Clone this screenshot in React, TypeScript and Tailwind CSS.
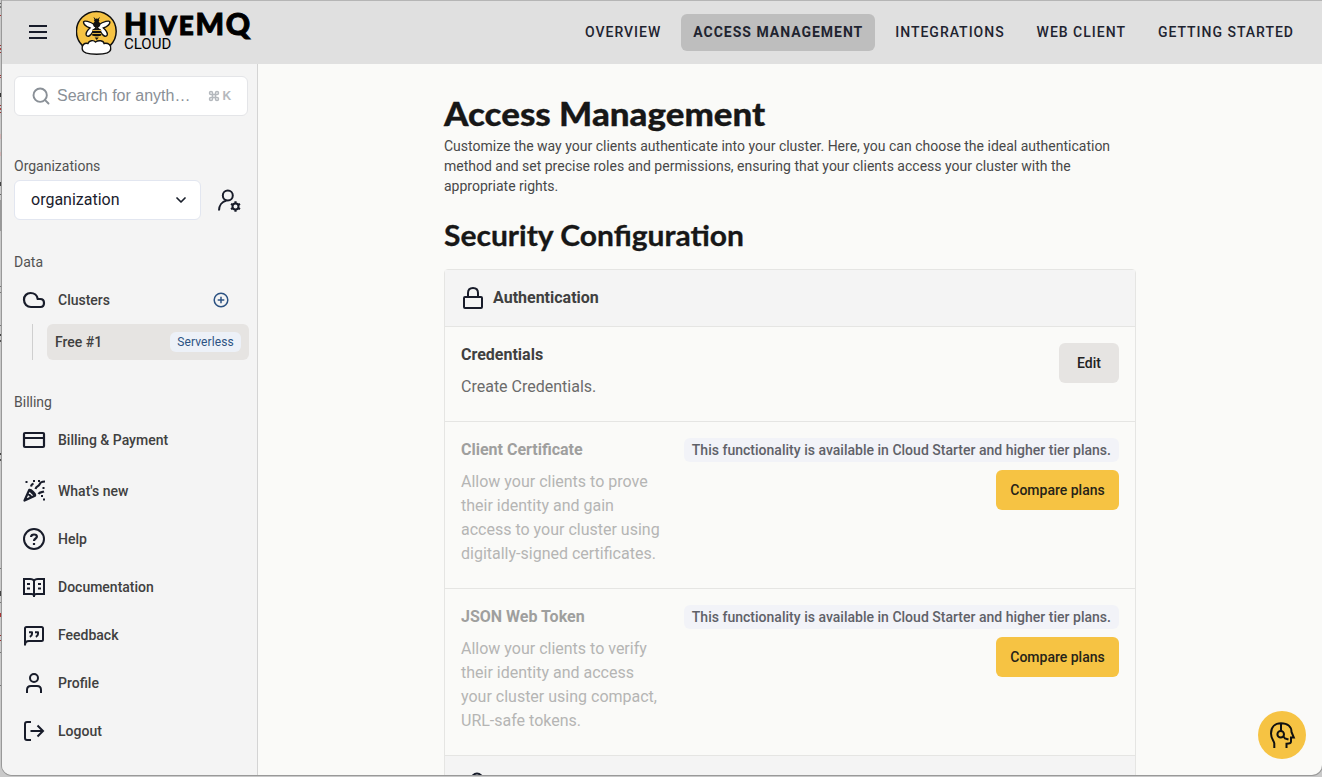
import React from "react";
import { Search, Command, ChevronDown } from "lucide-react";

const line = { fill: "none", stroke: "currentColor", strokeWidth: 2, strokeLinecap: "butt" as const, strokeLinejoin: "round" as const };

function Icon({ children, className = "size-6" }: { children: React.ReactNode; className?: string }) {
  return (
    <svg viewBox="0 0 24 24" className={`shrink-0 text-[#181c2a] ${className}`} {...line}>
      {children}
    </svg>
  );
}

const icons = {
  cloud: <path d="M8.500 5C4.800 5 2 7.800 2 11.700C2 15.800 5 19 9 19H18.500C20.700 19 22 17.200 22 15C22 12.600 20.500 11 18.200 11H15.700C15.200 7.500 12.300 5 8.500 5Z" strokeWidth="2.200" />,
  card: <><rect x="2" y="5" width="20" height="14" rx="1" strokeWidth="2.200" /><path d="M2 10H22" /></>,
  party: <><path strokeWidth="2.200" d="M2.500 21.500L7.200 11L13 16.800L2.500 21.500ZM7.200 11C9 10.500 14 15 13 16.800M6 14.500L9.500 18" /><path strokeWidth="2.200" d="M9 7.500C9.300 5.500 10 5 11.500 4.500M13.500 10C14.500 7 16 8 17.500 5.500C18 3.500 19 2.500 23 2.500M16.500 15C18 12.500 19.500 13.500 22 12.500" /><path d="M3.500 3H5.500M11 2H13M16 2H18M20.500 9H22.500M21 20.500H23M19 17H21" /></>,
  help: <><circle cx="12" cy="12" r="10" /><path strokeWidth="2.200" d="M9 10C9.200 8.200 10.400 7.500 12 7.500C13.700 7.500 14.900 8.400 14.900 9.800C14.900 11.600 12 11.500 12 14M12 16V18" /></>,
  book: <path strokeLinejoin="miter" d="M12 5V22M12 6C11.500 4.500 10 4 8 4H2V19H9.500C11 19 12 19.500 12 21C12 19.500 13 19 14.500 19H22V4H16C14 4 12.500 4.500 12 6M5 9H8M5 13.500H8M16 9H19M16 13.500H19" />,
  quote: <><path strokeLinejoin="miter" d="M3 22.500V5.500C3 4.500 3.500 4 4.500 4H19.500C20.500 4 21 4.500 21 5.500V16.500C21 17.500 20.500 18 19.500 18H7C5 18 3 19 3 22Z" /><path d="M7 9.200H10V11C10 12.300 9.500 13 7.800 13.800M13 9.200H16V11C16 12.300 15.500 13 13.800 13.800" /></>,
  user: <><circle cx="12" cy="7" r="4" /><path d="M5 22V19C5 16.500 6.500 15 9 15H15C17.500 15 19 16.500 19 19V22" /></>,
  logout: <path strokeLinejoin="miter" d="M9 3H5C3.500 3 3 3.500 3 5V19C3 20.500 3.500 21 5 21H9M8.500 12H21M15.500 6.500L21 12L15.500 17.500" />,
};

function BeeMark() {
  return (
    <svg viewBox="0 0 42 45" className="h-[45px] w-[42px] shrink-0">
      <circle cx="20.300" cy="21.300" r="19.900" fill="#f6c343" stroke="#111" strokeWidth="1.500" />
      <path d="M7.500 12C8 10 14 11.500 19 15L20 18C17 20 16 25.500 12.500 26.300C9.500 26.500 8.500 23 14 18C10 16.500 7.500 14.500 7.500 12Z M33.900 12C33.400 10 27.400 11.500 22.400 15L21.400 18C24.400 20 25.400 25.500 28.900 26.300C31.900 26.500 32.900 23 27.400 18C31.400 16.500 33.900 14.500 33.900 12Z" fill="#fff" stroke="#111" strokeWidth="1.400" />
      <path d="M18 7.500L19.500 10M23.400 7.500L21.900 10" stroke="#111" strokeWidth="1" />
      <ellipse cx="20.700" cy="10.500" rx="2.600" ry="2" fill="#111" />
      <ellipse cx="20.700" cy="14.500" rx="3.600" ry="3" fill="#111" />
      <path d="M16.200 20C17.500 17.500 23.900 17.500 25.200 20V25.500C24 26.500 17.500 26.500 16.200 25.500Z" fill="#111" />
      <path d="M16.200 20.500H25.200M16.200 23.500H25.200" stroke="#f6c343" strokeWidth="0.900" />
      <path d="M18.700 27.500H22.700L20.700 30Z" fill="#111" />
      <path d="M6.200 39C5.500 35 8.500 32.500 12 33.500C13 30.500 17.500 29.700 19.500 32C22.500 29.800 27.500 30.500 28 33.500C32.500 32.500 35.500 35.500 34.700 39C34.500 43 27.500 44.200 20.700 44.200C13.500 44.200 6.500 43 6.200 39Z" fill="#fff" stroke="#111" strokeWidth="1.400" />
    </svg>
  );
}

function NavItem({ icon, label }: { icon: React.ReactNode; label: string }) {
  return (
    <a className="flex h-12 items-center gap-3 pl-2 text-sm font-medium text-[#404040]">
      {icon}
      <span>{label}</span>
    </a>
  );
}

function LockedRow({ title, lines }: { title: string; lines: string[] }) {
  return (
    <div className="flex h-[167px] items-start justify-between border-b border-[#e5e5e3] px-4 pt-4">
      <div className="text-[#b5b5b4]">
        <h3 className="text-base font-bold leading-6 text-[#9f9f9e]">{title}</h3>
        <p className="mt-2 text-base leading-6 whitespace-nowrap">
          {lines.map((l) => <span key={l} className="block">{l}</span>)}
        </p>
      </div>
      <div className="flex flex-col items-end gap-2">
        <span className="flex h-6 items-center rounded-md bg-[#f2f3f8] px-2 text-sm font-medium tracking-[0.014px] whitespace-nowrap text-[#5f6168]">This functionality is available in Cloud Starter and higher tier plans.</span>
        <button className="h-10 w-[123px] rounded-md bg-[#f6c343] text-sm font-medium text-[#262318]">Compare plans</button>
      </div>
    </div>
  );
}

/* Slivers of the window that lies behind this one, as [y, height, colour]. */
const slivers: [number, number, string][] = [
  [3, 1, "#666"], [6, 2, "#777"], [15, 1, "#a33"], [45, 1, "#933"], [48, 2, "#a44"], [52, 1, "#933"],
  [75, 1, "#933"], [77, 1, "#a44"], [93, 4, "#333"], [105, 1, "#933"], [108, 2, "#a44"], [112, 1, "#933"],
  [134, 5, "#d5b5b5"], [152, 4, "#d5b5b5"], [182, 4, "#444"], [194, 1, "#666"], [200, 31, "#999"],
  [286, 1, "#777"], [292, 1, "#777"], [325, 1, "#777"], [334, 2, "#444"], [340, 2, "#555"],
  [453, 2, "#444"], [459, 2, "#555"], [568, 1, "#777"], [591, 5, "#444"], [602, 1, "#777"],
  [613, 4, "#a33"], [635, 1, "#933"], [640, 1, "#933"], [652, 1, "#777"], [685, 1, "#777"],
];

export default function App() {
  return (
    <div className="flex h-[777px] w-[1322px] overflow-hidden bg-[#c9c9c9] font-['Roboto',sans-serif]">
      <svg viewBox="0 0 2 777" className="h-[777px] w-0.5 shrink-0">
        {slivers.map(([y, h, c]) => <rect key={y} x="0" y={y} width="2" height={h} fill={c} />)}
      </svg>
      <div className="flex h-[775px] w-[1320px] flex-col overflow-hidden rounded-b-[10px] border-t border-[#b5b5b5] bg-[#fafaf8] shadow-[0_0_0_1px_#999]">
        <header className="flex h-[63px] shrink-0 items-center bg-[#e0e0e0] pb-px">
          <Icon className="ml-6 size-6"><path d="M3 6H21M3 12H21M3 18H21" /></Icon>
          <div className="ml-[26px] flex items-center gap-1.5">
            <BeeMark />
            <div className="flex h-[45px] w-[134px] flex-col text-black">
              <div className="flex h-[26px] items-baseline font-['Lato',sans-serif] text-[30px] leading-[27px] font-black tracking-[1.8px] whitespace-nowrap [-webkit-text-stroke:1px_black]"><span>H</span><span className="text-[26px]">IVE</span><span>MQ</span></div>
              <div className="text-[15px] leading-[16px]">CLOUD</div>
            </div>
          </div>
          <nav className="mr-4 ml-auto flex items-center gap-2 text-sm font-medium tracking-[0.99px] whitespace-nowrap text-[#1f2430]">
            <a className="px-3">OVERVIEW</a>
            <a className="mt-px flex h-[37px] items-center rounded-md bg-[#bebebe] px-3 pb-px font-bold">ACCESS MANAGEMENT</a>
            <a className="px-3">INTEGRATIONS</a>
            <a className="px-3">WEB CLIENT</a>
            <a className="px-3">GETTING STARTED</a>
          </nav>
        </header>
        <div className="flex min-h-0 flex-1">
          <aside className="flex w-64 shrink-0 flex-col border-r border-[#d4d4d4] bg-[#f4f4f4] pt-3 pr-2 pl-3">
            <div className="flex h-10 w-[234px] shrink-0 items-center rounded-md border border-[#e4e5e8] bg-white pl-4 text-[#8a9097]">
              <Search className="size-5" strokeWidth={2.3} />
              <span className="ml-1.5 font-['Liberation_Sans',sans-serif] text-base">Search for anyth…</span>
              <span className="ml-[18px] flex items-center gap-0.5 font-['Liberation_Sans',sans-serif] text-xs font-bold text-[#b4b8bd]"><Command className="size-3" strokeWidth={3} />K</span>
            </div>
            <div className="mt-10 text-sm leading-5 text-[#525252]">Organizations</div>
            <div className="mt-1 flex items-center gap-4">
              <div className="flex h-10 w-[187px] items-center justify-between rounded-md border border-[#e2e6f0] bg-white pr-[11px] pl-4 text-base text-[#1a202c]">organization<ChevronDown className="size-4" strokeWidth={2.6} /></div>
              <Icon className="mt-0.5 size-6"><circle cx="10.800" cy="6.500" r="5" /><path d="M2 21.500C2 16.500 5 12.500 9.500 11.500" /><circle cx="18.500" cy="17.500" r="3" /><path strokeWidth="2.200" d="M18.500 12.300V14.500M18.500 20.500V22.700M14 14.900L16 16M21 19L23 20.100M14 20.100L16 19M21 16L23 14.900" /></Icon>
            </div>
            <div className="mt-8 text-sm leading-5 text-[#525252]">Data</div>
            <div className="mt-1 flex items-center pr-5">
              <div className="flex-1"><NavItem icon={<Icon>{icons.cloud}</Icon>} label="Clusters" /></div>
              <svg viewBox="0 0 16 16" className="size-4 text-[#2c5282]" fill="none" stroke="currentColor" strokeWidth="1.500"><circle cx="8" cy="8" r="6.800" /><path d="M8 4.700V11.300M4.700 8H11.300" /></svg>
            </div>
            <div className="ml-[18px] flex h-9 border-l border-[#cfcfcf] pl-3.5">
              <div className="flex w-[202px] shrink-0 items-center justify-between rounded-md bg-[#e6e4e2] px-2 text-sm font-medium text-[#404040]">Free #1<span className="flex h-5 w-[71px] items-center justify-center rounded-md bg-[#edf1f8] text-xs font-normal tracking-[0.1px] text-[#2c5282]">Serverless</span></div>
            </div>
            <div className="mt-8 text-sm leading-5 text-[#525252]">Billing</div>
            <div className="mt-1 flex flex-col">
              <NavItem icon={<Icon>{icons.card}</Icon>} label="Billing & Payment" />
              <div className="mt-[3px]"><NavItem icon={<Icon>{icons.party}</Icon>} label="What's new" /></div>
              <NavItem icon={<Icon>{icons.help}</Icon>} label="Help" />
              <NavItem icon={<Icon>{icons.book}</Icon>} label="Documentation" />
              <NavItem icon={<Icon>{icons.quote}</Icon>} label="Feedback" />
              <NavItem icon={<Icon>{icons.user}</Icon>} label="Profile" />
              <NavItem icon={<Icon>{icons.logout}</Icon>} label="Logout" />
            </div>
          </aside>
          <main className="flex-1 overflow-hidden pt-[31px] pl-[186px]">
            <h1 className="w-[300px] origin-left scale-x-[1.091] font-['Lato',sans-serif] text-[32px] leading-[38px] font-black whitespace-nowrap text-[#171717] [-webkit-text-stroke:0.3px_#171717]">Access Management</h1>
            <p className="mt-[3px] text-sm leading-5 whitespace-nowrap text-[#484848]">Customize the way your clients authenticate into your cluster. Here, you can choose the ideal authentication<br />method and set precise roles and permissions, ensuring that your clients access your cluster with the<br />appropriate rights.</p>
            <h2 className="mt-[22px] w-[300px] origin-left scale-x-[1.072] font-['Lato',sans-serif] text-[28px] leading-[34px] font-bold whitespace-nowrap text-[#171717] [-webkit-text-stroke:0.3px_#171717]">Security Configuration</h2>
            <section className="mt-[17px] w-[692px] rounded-t border border-[#e5e5e3]">
              <div className="flex h-[57px] items-center gap-2 border-b border-[#e5e5e3] bg-[#f4f4f4] px-4 text-base font-bold text-[#404040]">
                <Icon><rect x="3" y="11" width="18" height="11" rx="1" /><path d="M7 11V7C7 4 9 2 12 2C15 2 17 4 17 7V11" /></Icon>Authentication
              </div>
              <div className="flex h-[95px] items-start justify-between border-b border-[#e5e5e3] px-4 pt-4">
                <div><h3 className="text-base font-bold leading-6 text-[#404040]">Credentials</h3><p className="mt-2 text-base leading-6 text-[#6b6b6b]">Create Credentials.</p></div>
                <button className="h-10 w-[60px] rounded-md bg-[#e6e4e2] text-sm font-medium text-[#222]">Edit</button>
              </div>
              <LockedRow title="Client Certificate" lines={["Allow your clients to prove", "their identity and gain", "access to your cluster using", "digitally-signed certificates."]} />
              <LockedRow title="JSON Web Token" lines={["Allow your clients to verify", "their identity and access", "your cluster using compact,", "URL-safe tokens."]} />
              <div className="h-14 bg-[#f4f4f4] px-5 pt-4"><Icon><circle cx="12" cy="7" r="5.500" /></Icon></div>
            </section>
          </main>
        </div>
      </div>
      <button className="fixed top-[711px] left-[1258px] size-12 rounded-full bg-[#f6c343]">
        <svg viewBox="0 0 48 48" className="size-12" fill="none" stroke="#111" strokeWidth="2"><path d="M16.300 37V32.500C16.300 30 13 28 13 22.500C13 16 17 12.300 23 12.300C30 12.300 33.500 16 33.500 21L35.800 26.500H33V30.500C33 32.300 32 32.700 28.500 32.700V37M23 12.300V20M25.500 25.500L27 27.500L30.500 28.500" /><circle cx="22.700" cy="23.300" r="3.300" /></svg>
      </button>
    </div>
  );
}
